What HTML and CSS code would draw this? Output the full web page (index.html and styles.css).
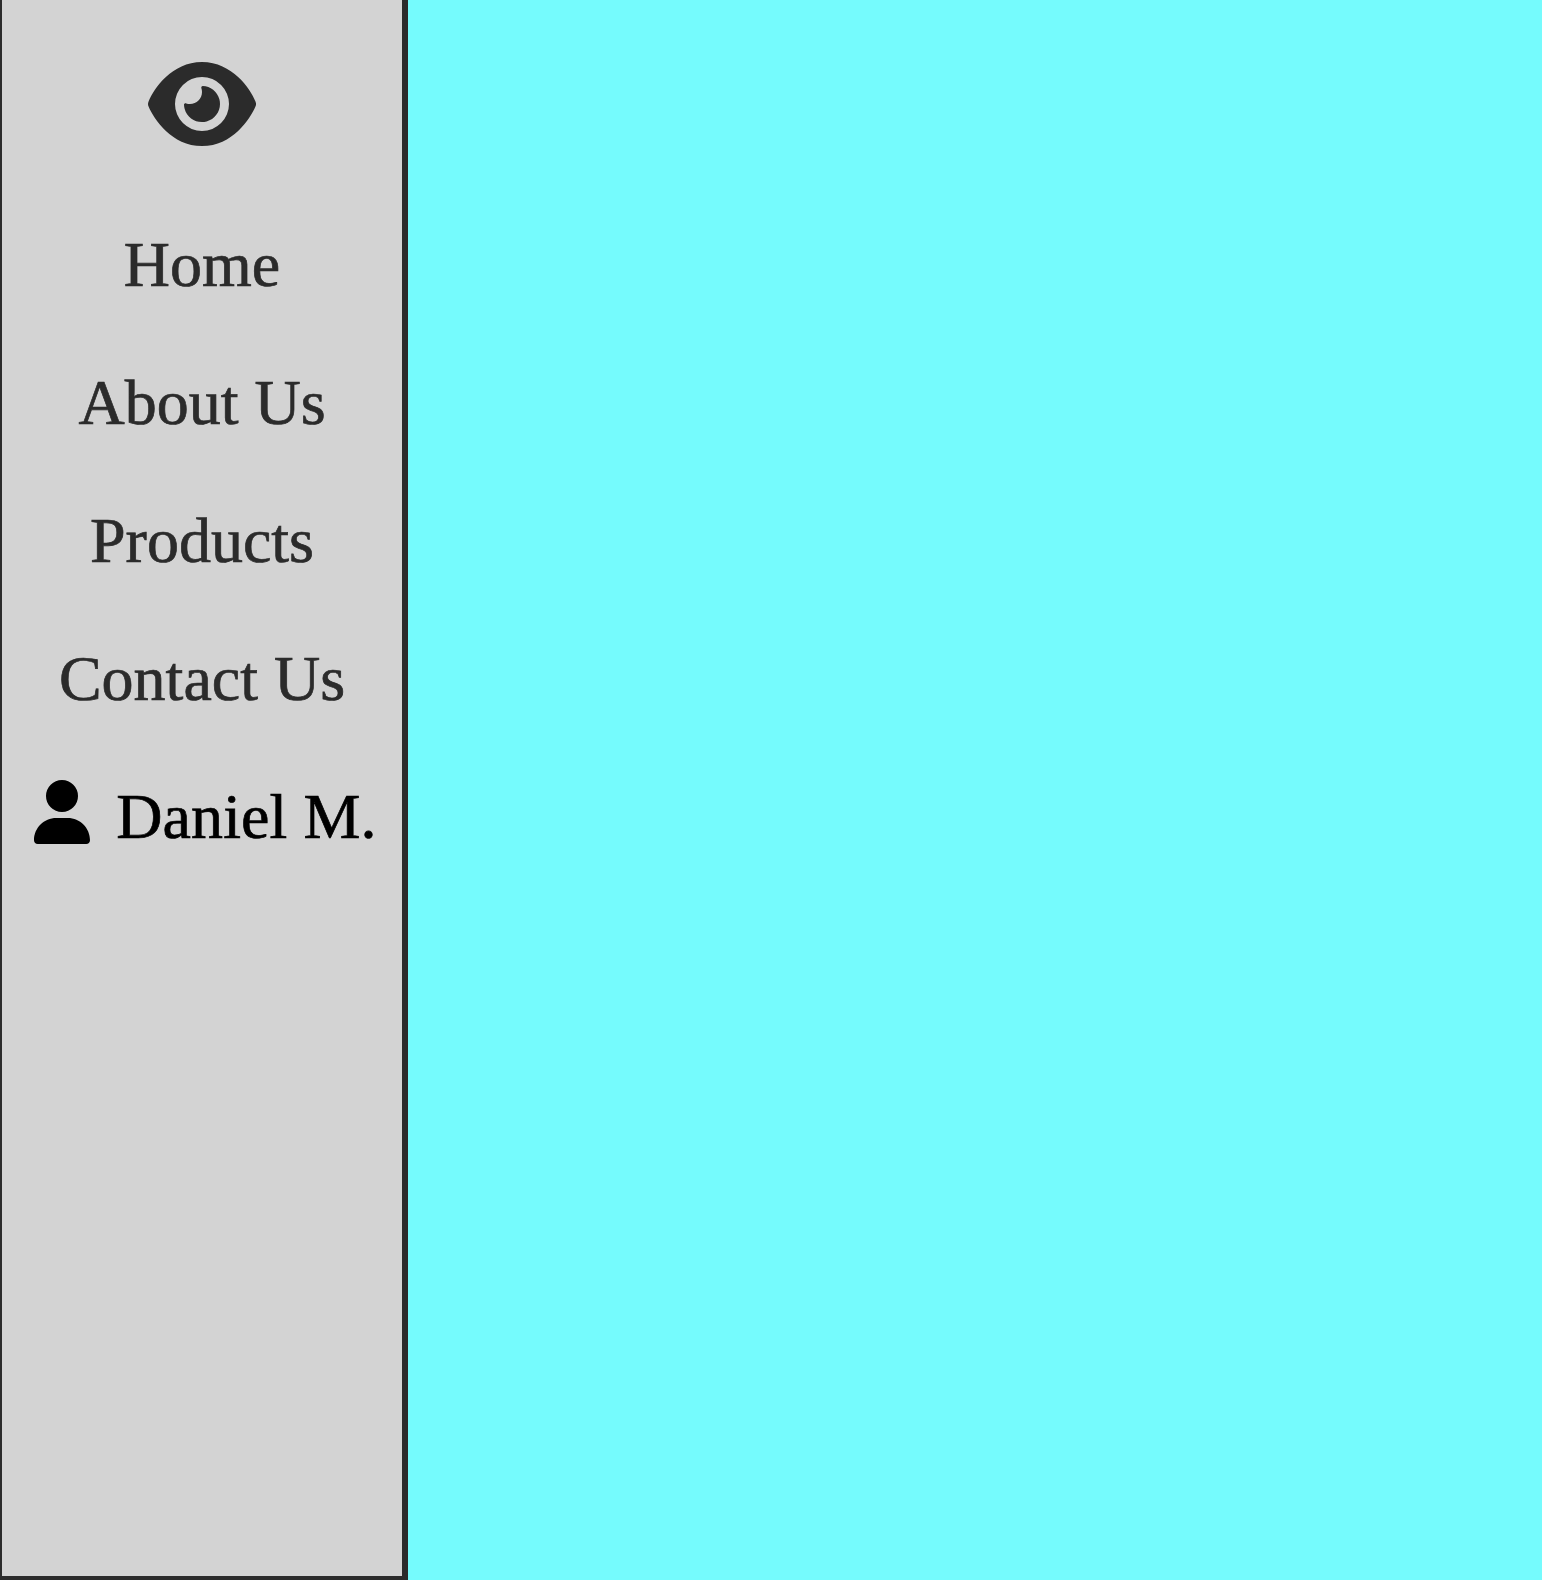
FILE: index.html
```html
<!DOCTYPE html>
<html lang="en">
<head>
<meta charset="utf-8">
<title>Home</title>
<link rel="stylesheet" href="styles.css">
</head>
<body>
<nav class="sidebar">
  <a class="logo" aria-label="Logo"><svg viewBox="0 0 576 512"><path d="M288 32c-80.800 0-145.500 36.800-192.600 80.600C48.600 156 17.300 208 2.500 243.700c-3.300 7.900-3.300 16.700 0 24.600C17.300 304 48.600 356 95.400 399.400C142.500 443.200 207.200 480 288 480s145.500-36.800 192.600-80.600c46.800-43.500 78.100-95.400 93-131.100c3.300-7.900 3.300-16.700 0-24.600c-14.900-35.700-46.200-87.700-93-131.100C433.500 68.800 368.800 32 288 32zM144 256a144 144 0 1 1 288 0 144 144 0 1 1-288 0zm144-64c0 35.300-28.700 64-64 64c-7.100 0-13.900-1.200-20.300-3.300c-5.500-1.800-11.900 1.600-11.700 7.400c.3 6.900 1.300 13.800 3.200 20.700c13.700 51.200 66.400 81.600 117.600 67.900s81.600-66.400 67.900-117.600c-11.100-41.500-47.800-69.400-88.600-71.100c-5.800-.2-9.200 6.100-7.400 11.700c2.100 6.400 3.300 13.200 3.300 20.300z"/></svg></a>
  <a class="link">Home</a>
  <a class="link">About Us</a>
  <a class="link">Products</a>
  <a class="link">Contact Us</a>
  <div class="user">
    <svg viewBox="0 0 448 512"><path d="M224 256A128 128 0 1 0 224 0a128 128 0 1 0 0 256zm-45.700 48C79.800 304 0 383.800 0 482.300C0 498.700 13.300 512 29.700 512H418.300c16.400 0 29.700-13.300 29.700-29.700C448 383.800 368.200 304 269.700 304H178.300z"/></svg>
    <span class="name">Daniel M.</span>
  </div>
</nav>
<main class="content"></main>
</body>
</html>
```
FILE: styles.css
```css
* { box-sizing: border-box; }
body {
  display: flex;
  height: 100vh;
  margin: 0;
  overflow: hidden;
  background: #75fbfd;
  font-family: "Liberation Serif", "Times New Roman", serif;
  font-size: 64px;
  line-height: 74px;
}
.sidebar {
  display: flex;
  flex-direction: column;
  align-items: center;
  width: 408px;
  height: 100vh;
  padding-top: 50px;
  border: solid #2b2b2b;
  border-width: 0 6px 4px 2px;
  background: #d3d3d3;
  color: #2b2b2b;
}
.logo { display: flex; height: 108px; align-items: center; margin-bottom: 70px; }
.logo svg { width: 108px; height: 96px; fill: currentColor; }
.link { margin-bottom: 64px; }
.link, .name { -webkit-text-stroke: 0.7px currentColor; }
.user { display: flex; gap: 26px; padding-left: 7px; color: #000; white-space: nowrap; }
.user svg { width: 56px; height: 64px; fill: currentColor; }
.name { letter-spacing: 0.1px; }
.content { flex: 1; }
```
